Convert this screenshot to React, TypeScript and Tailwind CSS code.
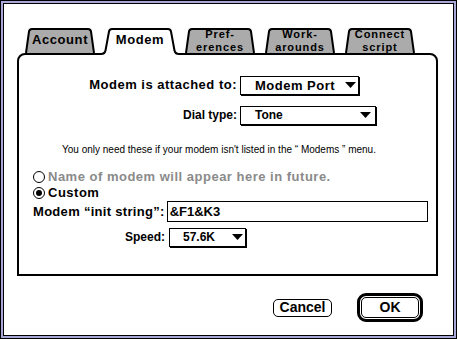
import React from "react";

// Mac OS dialog: modem settings panel with folder tabs

const ARROW = (
  <svg width="11" height="6" viewBox="0 0 11 6" className="shrink-0">
    <polygon points="0,0 11,0 5.5,6" fill="black" />
  </svg>
);

function Tab({ lines, selected }: { lines: string[]; selected?: boolean }) {
  return (
    <div className="relative w-[70px] h-[27px] flex flex-col items-center justify-center pb-[2px]">
      <svg
        className="absolute inset-0 overflow-visible"
        width="70"
        height="27"
        viewBox="0 0 70 27"
      >
        {selected ? (
          <>
            <path
              d="M-4,27 L-4,26 Q0,26 0.6,22 L4,3.5 Q4.6,1 7,1 L63,1 Q65.4,1 66,3.5 L69.4,22 Q70,26 74,26 L74,27 Z"
              fill="white"
            />
            <path
              d="M-4,26 Q0,26 0.6,22 L4,3.5 Q4.6,1 7,1 L63,1 Q65.4,1 66,3.5 L69.4,22 Q70,26 74,26"
              fill="none"
              stroke="black"
              strokeWidth="2"
            />
          </>
        ) : (
          <path
            d="M1,25 L4,3.5 Q4.6,1 7,1 L63,1 Q65.4,1 66,3.5 L69,25"
            fill="#ababab"
            stroke="black"
            strokeWidth="2"
          />
        )}
      </svg>
      {lines.map((l) => (
        <span
          key={l}
          className={`relative font-bold ${
            lines.length > 1
              ? "text-[11px] leading-[12.5px] tracking-[0.9px]"
              : "text-[13px] leading-[14px] tracking-[0.6px] mb-[1px]"
          }`}
        >
          {l}
        </span>
      ))}
    </div>
  );
}

function Popup({
  label,
  width,
  pl,
  pr,
  big,
}: {
  label: string;
  width: string;
  pl: string;
  pr: string;
  big?: boolean;
}) {
  return (
    <div
      className={`flex items-center h-[19px] border border-black bg-white shadow-[1px_1px_0_#000] ${width} ${pl} ${pr}`}
    >
      <span
        className={`flex-1 font-bold leading-[15px] ${
          big ? "text-[13px] tracking-[0.5px]" : "text-[12px]"
        }`}
      >
        {label}
      </span>
      {ARROW}
    </div>
  );
}

function Radio({ checked, disabled, label }: { checked?: boolean; disabled?: boolean; label: string }) {
  return (
    <div className="flex items-center h-[14px] gap-[3px]">
      <div className="w-[12px] h-[12px] rounded-full border border-black flex items-center justify-center">
        {checked && <div className="w-[6px] h-[6px] rounded-full bg-black" />}
      </div>
      <span
        className={`text-[13px] leading-[14px] font-bold tracking-[0.5px] ${
          disabled ? "text-[#8a8a8a]" : "text-black"
        }`}
      >
        {label}
      </span>
    </div>
  );
}

export default function App() {
  return (
    <div className="w-[457px] h-[339px] border border-black bg-[#a8a8d8] p-[2px] font-['Liberation_Sans',Arial,sans-serif] text-black">
      <div className="h-full border border-black bg-white flex flex-col">
        {/* TABS */}
        <div className="relative z-10 flex gap-[10px] mt-[24px] pl-[21px] -mb-[2px]">
          <Tab lines={["Account"]} />
          <Tab lines={["Modem"]} selected />
          <Tab lines={["Pref-", "erences"]} />
          <Tab lines={["Work-", "arounds"]} />
          <Tab lines={["Connect", "script"]} />
        </div>

        {/* PANEL */}
        <div className="ml-[13px] w-[421px] h-[223px] border-2 border-black rounded-t-[8px] flex flex-col">
          <div className="flex items-center mt-[20px] h-[20px]">
            <span className="w-[218px] text-right text-[13px] font-bold tracking-[0.5px]">
              Modem is attached to:
            </span>
            <div className="ml-[3px]">
              <Popup label="Modem Port" width="w-[119px]" pl="pl-[14px]" pr="pr-[2px]" big />
            </div>
          </div>

          <div className="flex items-center mt-[10px] h-[20px]">
            <span className="w-[218px] text-right text-[12px] font-bold">Dial type:</span>
            <div className="ml-[3px]">
              <Popup label="Tone" width="w-[136px]" pl="pl-[14px]" pr="pr-[4px]" />
            </div>
          </div>

          <p className="mt-[19px] h-[11px] leading-[11px] text-[10px] pl-[43px] whitespace-nowrap">
            You only need these if your modem isn&apos;t listed in the “ Modems ” menu.
          </p>

          <div className="pl-[14px] mt-[15px] flex flex-col gap-[2px]">
            <Radio disabled label="Name of modem will appear here in future." />
            <Radio checked label="Custom" />
          </div>

          <div className="flex items-center pl-[14px] mt-[1px] h-[21px]">
            <span className="whitespace-nowrap text-[13px] leading-[15px] font-bold tracking-[0.3px]">
              Modem “init string”:
            </span>
            <div className="ml-[2px] w-[261px] h-[21px] border border-black flex items-center pl-[2px] text-[13px] leading-[15px] font-bold">
              &amp;F1&amp;K3
            </div>
          </div>

          <div className="flex items-center mt-[6px] h-[18px]">
            <span className="w-[146px] text-right text-[12px] font-bold">Speed:</span>
            <div className="ml-[4px]">
              <Popup label="57.6K" width="w-[77px]" pl="pl-[13px]" pr="pr-[2px]" />
            </div>
          </div>
        </div>

        {/* BUTTONS */}
        <div className="flex justify-end items-center gap-[25px] mt-[17px] pr-[30px]">
          <button className="w-[59px] h-[18px] border border-black rounded-[5px] flex items-center justify-center text-[14px] font-bold">
            Cancel
          </button>
          <div className="w-[66px] h-[29px] border-[3px] border-black rounded-[9px] p-[1px]">
            <button className="w-full h-full border border-black rounded-[5px] flex items-center justify-center text-[14px] font-bold">
              OK
            </button>
          </div>
        </div>
      </div>
    </div>
  );
}
